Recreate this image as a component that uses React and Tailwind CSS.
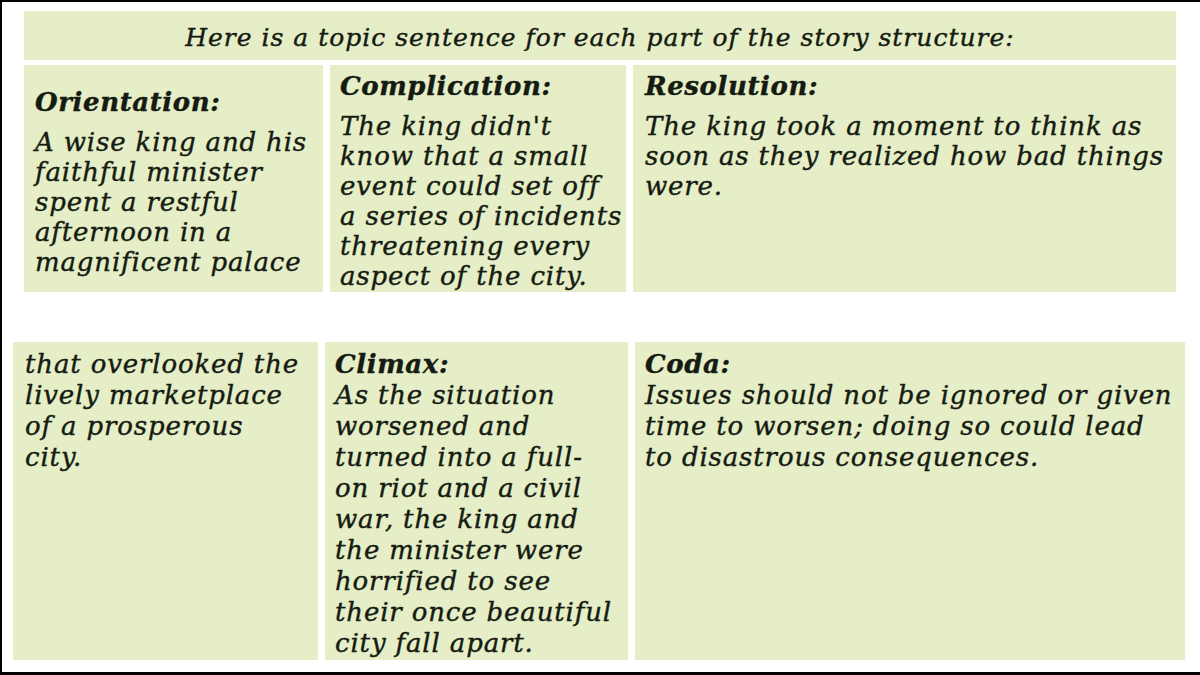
import React from 'react';

const topRow = [
    {
        heading: 'Orientation:',
        lines: ['A wise king and his', 'faithful minister', 'spent a restful', 'afternoon in a', 'magnificent palace'],
        width: 'w-[299px]',
        pad: 'pt-[22px] pl-[11px]',
    },
    {
        heading: 'Complication:',
        lines: ["The king didn't", 'know that a small', 'event could set off', 'a series of incidents', 'threatening every', 'aspect of the city.'],
        width: 'w-[296px]',
        pad: 'pt-[6px] pl-[10px]',
    },
    {
        heading: 'Resolution:',
        lines: ['The king took a moment to think as', 'soon as they realized how bad things', 'were.'],
        width: 'flex-1',
        pad: 'pt-[6px] pl-[12px]',
    },
];

const bottomRow = [
    {
        heading: null,
        lines: ['that overlooked the', 'lively marketplace', 'of a prosperous', 'city.'],
        width: 'w-[305px]',
        pad: 'pt-[7px] pl-[12px]',
    },
    {
        heading: 'Climax:',
        lines: ['As the situation', 'worsened and', 'turned into a full-', 'on riot and a civil', 'war, the king and', 'the minister were', 'horrified to see', 'their once beautiful', 'city fall apart.'],
        width: 'w-[303px]',
        pad: 'pt-[7px] pl-[10px]',
    },
    {
        heading: 'Coda:',
        lines: ['Issues should not be ignored or given', 'time to worsen; doing so could lead', 'to disastrous consequences.'],
        width: 'flex-1',
        pad: 'pt-[7px] pl-[10px]',
    },
];

const Cell = ({ cell, headGap, leading }) => (
    <div className={`${cell.width} ${cell.pad} bg-[#e5eec6] italic text-[26px] tracking-[0.85px] text-[#161b12] [-webkit-text-stroke:0.4px_#161b12] ${leading}`}>
        {cell.heading && <div className={`font-bold tracking-[0.6px] whitespace-nowrap ${headGap}`}>{cell.heading}</div>}
        {cell.lines.map((line, i) => (
            <div key={i} className="whitespace-nowrap">{line}</div>
        ))}
    </div>
);

export default function App() {
    return (
        <div
            className="w-[1200px] h-[675px] bg-white border-t-2 border-l-2 border-b-[3px] border-black overflow-hidden"
            style={{ fontFamily: '"DejaVu Serif", "Liberation Serif", serif' }}
        >
            {/* upper table */}
            <div className="ml-[22px] mt-[9px] w-[1152px] flex flex-col gap-[5px]">
                <div className="h-[49px] bg-[#e5eec6] flex items-center justify-center pt-[4px] italic text-[25px] tracking-[1px] text-[#161b12] [-webkit-text-stroke:0.4px_#161b12]">
                    Here is a topic sentence for each part of the story structure:
                </div>
                <div className="h-[227px] flex gap-[7px]">
                    {topRow.map((cell, i) => (
                        <Cell key={i} cell={cell} headGap="mb-[10px]" leading="leading-[30px]" />
                    ))}
                </div>
            </div>

            {/* lower table */}
            <div className="ml-[11px] mt-[50px] w-[1172px] h-[318px] flex gap-[7px]">
                {bottomRow.map((cell, i) => (
                    <Cell key={i} cell={cell} headGap="" leading="leading-[31px]" />
                ))}
            </div>
        </div>
    );
}
